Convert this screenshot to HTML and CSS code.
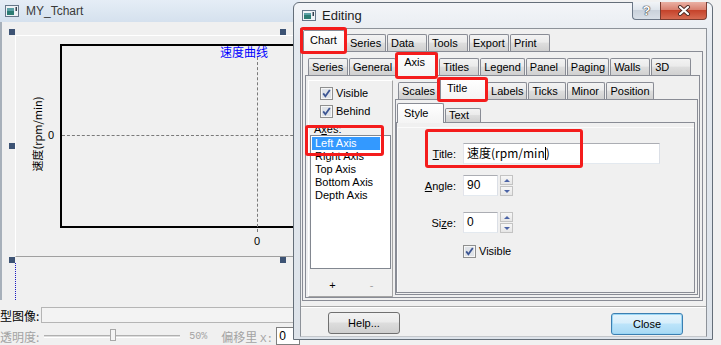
FILE: index.html
```html
<!DOCTYPE html>
<html>
<head>
  <meta charset="utf-8">
  <title>MY_Tchart - Editing</title>
  <link rel="stylesheet" href="styles.css">
</head>
<body>
<div class="desk">

  <!-- designer window with the chart -->
  <div class="chartwin">
    <div class="wtitle">
      <svg class="wicon" width="14" height="12" viewBox="0 0 14 12"><rect x="0.5" y="0.5" width="13" height="11" fill="#eef2f6" stroke="#66778a"/><rect x="2" y="3" width="7" height="7" fill="#2c7c73"/><rect x="2" y="3" width="7" height="3" fill="#5aa0a6"/><rect x="10.5" y="2" width="1.5" height="4" fill="#33404e"/></svg>
      <span>MY_Tchart</span>
    </div>
    <div class="canvas">
      <div class="design">
        <div class="plot">
          <span class="ptitle">速度曲线</span>
          <span class="grid gv"></span>
          <span class="grid gh"></span>
          <span class="ylab">0</span>
          <span class="xlab">0</span>
          <span class="ytitle">速度(rpm/min)</span>
        </div>
      </div>
    </div>
    <div class="frow">
      <span class="flabel">型图像:</span>
      <span class="fbox"></span>
    </div>
    <div class="frow dim">
      <span class="flabel">透明度:</span>
      <span class="slider"><span class="thumb"></span></span>
      <span class="pct">50%</span>
      <span class="off">偏移里 <b>X:</b></span>
      <span class="numbox">0</span>
    </div>

    <span class="handle h1"></span>
    <span class="handle h2"></span>
    <span class="handle h3"></span>
    <span class="handle h4"></span>
    <span class="handle h5"></span>
    <span class="dots"></span>
  </div>

  <!-- TeeChart editor dialog -->
  <div class="dlg">
    <div class="dtitle">
      <svg class="wicon" width="14" height="11" viewBox="0 0 14 11"><rect x="0.5" y="0.5" width="13" height="10" fill="#eef2f6" stroke="#66778a"/><rect x="2" y="3" width="7" height="6" fill="#2c7c73"/><rect x="2" y="3" width="7" height="2" fill="#5aa0a6"/><rect x="10.5" y="2" width="1.5" height="4" fill="#33404e"/></svg>
      <span class="dname">Editing</span>
      <span class="cap q">?</span>
      <span class="cap x"><svg width="14" height="11" viewBox="0 0 14 11"><path d="M3 2 L11 9 M11 2 L3 9" stroke="#4b2a24" stroke-width="4" stroke-linecap="round"/><path d="M3 2 L11 9 M11 2 L3 9" stroke="#fff" stroke-width="2.2" stroke-linecap="round"/></svg></span>
    </div>

    <div class="client">
      <div class="tabs t1">
        <span class="tab on">Chart</span>
        <span class="tab">Series</span>
        <span class="tab">Data</span>
        <span class="tab">Tools</span>
        <span class="tab">Export</span>
        <span class="tab">Print</span>
      </div>
      <div class="page p1">
        <div class="tabs t2">
          <span class="tab">Series</span>
          <span class="tab">General</span>
          <span class="tab on">Axis</span>
          <span class="tab">Titles</span>
          <span class="tab">Legend</span>
          <span class="tab">Panel</span>
          <span class="tab">Paging</span>
          <span class="tab">Walls</span>
          <span class="tab">3D</span>
        </div>
        <div class="page p2">
          <div class="axcol">
            <div class="chk">
              <svg width="13" height="13" viewBox="0 0 13 13"><rect x="0.5" y="0.5" width="12" height="12" fill="#f6f6f6" stroke="#8e8f8f"/><rect x="2" y="2" width="9" height="9" fill="#dfe3e8"/><path d="M3.2 6.4 L5.4 9.2 L9.8 3" fill="none" stroke="#3c5593" stroke-width="1.8"/></svg>
              <span>Visible</span>
            </div>
            <div class="chk">
              <svg width="13" height="13" viewBox="0 0 13 13"><rect x="0.5" y="0.5" width="12" height="12" fill="#f6f6f6" stroke="#8e8f8f"/><rect x="2" y="2" width="9" height="9" fill="#dfe3e8"/><path d="M3.2 6.4 L5.4 9.2 L9.8 3" fill="none" stroke="#3c5593" stroke-width="1.8"/></svg>
              <span>Behind</span>
            </div>
            <div class="axlbl">A<u>x</u>es:</div>
            <div class="list">
              <div class="item sel">Left Axis</div>
              <div class="item">Right Axis</div>
              <div class="item">Top Axis</div>
              <div class="item">Bottom Axis</div>
              <div class="item">Depth Axis</div>
            </div>
            <div class="addrm"><span>+</span><span class="off-btn">-</span></div>
          </div>

          <div class="axright">
            <div class="tabs t3">
              <span class="tab">Scales</span>
              <span class="tab on">Title</span>
              <span class="tab">Labels</span>
              <span class="tab">Ticks</span>
              <span class="tab">Minor</span>
              <span class="tab">Position</span>
            </div>
            <div class="page p3">
              <div class="tabs t4">
                <span class="tab on">Style</span>
                <span class="tab">Text</span>
              </div>
              <div class="page p4">
                <div class="form">
                  <div class="frm-row">
                    <span class="flbl"><u>T</u>itle:</span>
                    <span class="ed wide">速度(rpm/min<i class="caret"></i>)</span>
                  </div>
                  <div class="frm-row r-angle">
                    <span class="flbl"><u>A</u>ngle:</span>
                    <span class="ed num">90</span>
                    <span class="ud"><span class="up"></span><span class="dn"></span></span>
                  </div>
                  <div class="frm-row r-size">
                    <span class="flbl">Si<u>z</u>e:</span>
                    <span class="ed num">0</span>
                    <span class="ud"><span class="up"></span><span class="dn"></span></span>
                  </div>
                  <div class="chk r-vis">
                    <svg width="13" height="13" viewBox="0 0 13 13"><rect x="0.5" y="0.5" width="12" height="12" fill="#f6f6f6" stroke="#8e8f8f"/><rect x="2" y="2" width="9" height="9" fill="#dfe3e8"/><path d="M3.2 6.4 L5.4 9.2 L9.8 3" fill="none" stroke="#3c5593" stroke-width="1.8"/></svg>
                    <span>Visible</span>
                  </div>
                </div>
              </div>
            </div>
          </div>
        </div>
      </div>

      <div class="foot">
        <button class="btn">Help...</button>
        <button class="btn primary">Close</button>
      </div>
    </div>
  </div>

  <!-- red annotation boxes -->
  <span class="mark m-chart"></span>
  <span class="mark m-axis"></span>
  <span class="mark m-title"></span>
  <span class="mark m-left"></span>
  <span class="mark m-input"></span>
</div>
</body>
</html>
```

FILE: styles.css
```css
* {
  box-sizing: border-box;
}

body {
  margin: 0;
  font-family: "Liberation Sans", "Noto Sans CJK SC", sans-serif;
  font-size: 11px;
  color: #000;
}

.desk {
  position: relative;
  width: 721px;
  height: 345px;
  overflow: hidden;
  background: #f1f1f1;
}

/* ---------- left window ---------- */

.chartwin {
  position: absolute;
  left: 0;
  top: 0;
  width: 300px;
  height: 345px;
  background: #f0f0f0;
  overflow: hidden;
}

.wtitle {
  height: 22px;
  display: flex;
  align-items: center;
  gap: 7px;
  padding-left: 5px;
  background: linear-gradient(#e5edf6, #d5e1ee);
  font-size: 12px;
  color: #3a3a3a;
}

.canvas {
  height: 278px;
  border-left: 2px solid #a7b0ba;
  padding: 13px 0 0 13px;
}

.design {
  height: 222px;
  border-top: 1px solid #fff;
  border-left: 1px solid #fff;
  border-bottom: 1px solid #a0a0a0;
  padding: 8px 0 0 44px;
}

.plot {
  position: relative;
  width: 260px;
  height: 184px;
  border: 2px solid #000;
  font-family: "Noto Sans CJK SC", sans-serif;
}

.ptitle {
  position: absolute;
  left: 158px;
  top: -1px;
  font-size: 12px;
  line-height: 14px;
  color: #0000ff;
}

.grid {
  position: absolute;
}

.gv {
  left: 195px;
  top: 11px;
  bottom: -6px;
  border-left: 1px dashed #7a7a7a;
}

.gh {
  left: 0;
  right: 0;
  top: 89px;
  border-top: 1px dashed #7a7a7a;
}

.ylab,
.xlab {
  position: absolute;
  font-family: "Liberation Sans", sans-serif;
  font-size: 11px;
  line-height: 12px;
}

.ylab {
  left: -14px;
  top: 83px;
}

.xlab {
  left: 192px;
  top: 189px;
}

.ytitle {
  position: absolute;
  left: -25px;
  top: 88px;
  font-size: 11px;
  white-space: nowrap;
  transform: translate(-50%, -50%) rotate(-90deg);
}

.frow {
  display: flex;
  align-items: center;
  font-family: "Noto Sans CJK SC", sans-serif;
  font-size: 12px;
  height: 16px;
  margin-top: 7px;
}

.frow.dim {
  height: 18px;
  margin-top: 4px;
  color: #a3a3a3;
}

.flabel {
  white-space: nowrap;
}

.fbox {
  flex: 1;
  height: 16px;
  margin-left: 2px;
  border: 1px solid #b5b5b5;
  background: #f3f3f3;
}

.slider {
  position: relative;
  width: 137px;
  height: 3px;
  margin-left: 5px;
  border-top: 1px solid #b0b0b0;
  border-bottom: 1px solid #fff;
  background: #dcdcdc;
}

.thumb {
  position: absolute;
  left: 66px;
  top: -7px;
  width: 6px;
  height: 12px;
  border: 1px solid #a8a8a8;
  background: #f4f4f4;
}

.pct {
  margin-left: 9px;
  font-family: "Liberation Mono", monospace;
  font-size: 10px;
}

.off {
  margin-left: 14px;
  white-space: nowrap;
}

.off b {
  font-weight: normal;
  font-family: "Liberation Mono", monospace;
  font-size: 11px;
}

.numbox {
  width: 24px;
  height: 18px;
  margin-left: 3px;
  padding-left: 2px;
  border: 1px solid #7f7f7f;
  background: #fff;
  color: #000;
  font-family: "Liberation Sans", sans-serif;
  line-height: 16px;
}

.handle {
  position: absolute;
  width: 6px;
  height: 6px;
  background: #3d5374;
}

.h1 { left: 9px; top: 29px; }
.h2 { left: 280px; top: 29px; }
.h3 { left: 9px; top: 143px; }
.h4 { left: 9px; top: 257px; }
.h5 { left: 280px; top: 257px; }

.dots {
  position: absolute;
  left: 15px;
  top: 263px;
  height: 37px;
  border-left: 1px dotted #1a1ac0;
}

/* ---------- dialog ---------- */

.dlg {
  position: absolute;
  left: 293px;
  top: 2px;
  width: 420px;
  height: 338px;
  display: flex;
  flex-direction: column;
  padding: 0 5px 2px 6px;
  border: 1px solid #646e79;
  border-radius: 6px 6px 0 0;
  background: linear-gradient(#f3f5f8, #e4e9ef 40px, #dde3ea);
}

.dtitle {
  height: 25px;
  display: flex;
  align-items: center;
}

.dtitle .wicon {
  margin-left: 2px;
}

.dname {
  margin-left: 6px;
  font-size: 13px;
  color: #1e1e1e;
}

.cap {
  align-self: flex-start;
  height: 18px;
  margin-top: -1px;
  display: flex;
  align-items: center;
  justify-content: center;
  border: 1px solid #6b7787;
  border-top: none;
}

.cap.q {
  margin-left: auto;
  width: 28px;
  border-right: none;
  border-radius: 0 0 0 4px;
  background: linear-gradient(#f1f4f7, #dfe5ec 45%, #c9d1db 50%, #d8dfe7);
  color: #fff;
  font-size: 13px;
  font-weight: bold;
  text-shadow: 0 0 1px #333, 0 0 1px #333, 0 0 1px #333;
}

.cap.x {
  width: 47px;
  border-color: #7c3c30;
  border-radius: 0 0 4px 0;
  background: linear-gradient(#eab0a3, #d98170 45%, #c5432b 50%, #d66b52);
}

.client {
  flex: 1;
  display: flex;
  flex-direction: column;
  background: #f0f0f0;
  border: 1px solid #8d9299;
  border-bottom-color: #c4c7cb;
}

/* tabs */

.tabs {
  display: flex;
  align-items: flex-end;
  position: relative;
  z-index: 1;
}

.tab {
  height: 17px;
  min-width: 40px;
  padding: 0 3px;
  margin-right: 1px;
  border: 1px solid #898c95;
  border-bottom: none;
  border-radius: 2px 2px 0 0;
  background: linear-gradient(#f3f3f3, #ebebeb 45%, #dedede 50%, #d0d0d0);
  line-height: 17px;
  white-space: nowrap;
}

.tab.on {
  position: relative;
  z-index: 2;
  margin-bottom: -1px;
  padding: 0 6px;
  background: linear-gradient(#fff, #f4f4f4);
  line-height: 18px;
}

.t1 {
  margin-top: 1px;
  padding-left: 2px;
}

.t1 .tab.on {
  height: 22px;
  min-width: 42px;
}

.t2 {
  padding-left: 3px;
}

.t2 .tab.on {
  height: 24px;
  min-width: 41px;
}

.t3 {
  padding-left: 3px;
}

.t3 .tab {
  min-width: 38px;
}

.t3 .tab.on {
  height: 22px;
  min-width: 46px;
}

.t4 {
  margin-top: 3px;
  padding-left: 1px;
}

.t4 .tab {
  height: 14px;
  line-height: 13px;
  min-width: 36px;
}

.t4 .tab.on {
  height: 20px;
  min-width: 47px;
  line-height: 18px;
}

.page {
  border: 1px solid #898c95;
  background: #f0f0f0;
}

.p1 {
  height: 250px;
  margin: 0 3px 0 1px;
  padding: 0 2px 2px 2px;
}

.p2 {
  height: 223px;
  display: flex;
}

.p3 {
  height: 196px;
  padding: 0 2px 1px 0;
}

.p4 {
  height: 171px;
}

/* axes column */

.axcol {
  width: 85px;
  margin: 4px 0 0 2px;
  padding: 6px 0 0 1px;
  border: 1px solid;
  border-color: #fff #a4a4a4 #a4a4a4 #fff;
}

.chk {
  display: flex;
  align-items: center;
  gap: 3px;
  height: 13px;
  margin: 0 0 5px 10px;
  line-height: 13px;
}

.axlbl {
  height: 12px;
  line-height: 12px;
  padding-left: 4px;
}

.list {
  width: 81px;
  height: 134px;
  padding: 1px;
  border: 1px solid #828790;
  background: #fff;
}

.item {
  height: 13px;
  line-height: 13px;
  padding-left: 3px;
  white-space: nowrap;
}

.item.sel {
  width: 68px;
  background: #3399ff;
  color: #fff;
}

.addrm {
  display: flex;
  margin-top: 10px;
  padding-left: 3px;
  line-height: 12px;
}

.addrm span {
  width: 39px;
  text-align: center;
}

.addrm .off-btn {
  color: #a0a0a0;
}

.axright {
  width: 303px;
  margin: 2px 0 0 2px;
}

/* title form */

.form {
  height: 100%;
  padding-top: 16px;
  border-top: 4px solid #f0f0f0;
  box-shadow: inset 1px 1px 0 #fbfbfb;
}

.frm-row {
  display: flex;
  align-items: center;
  height: 21px;
}

.r-angle {
  margin-top: 11px;
}

.r-size {
  margin-top: 16px;
}

.flbl {
  width: 60px;
  padding-right: 1px;
  text-align: right;
}

.ed {
  height: 21px;
  margin-left: 6px;
  padding-left: 3px;
  border: 1px solid;
  border-color: #abadb3 #dbdfe6 #e3e9ef #e2e3ea;
  background: #fff;
  font-size: 12px;
  line-height: 18px;
  white-space: nowrap;
}

.ed.wide {
  width: 197px;
  font-family: "Noto Sans CJK SC", sans-serif;
}

.caret {
  display: inline-block;
  width: 1px;
  height: 13px;
  vertical-align: -2px;
  background: #000;
}

.ed.num {
  width: 35px;
}

.ud {
  display: flex;
  flex-direction: column;
  gap: 1px;
  margin-left: 2px;
}

.ud span {
  width: 13px;
  height: 10px;
  border: 1px solid #c3c3c3;
  background: linear-gradient(#f7f7f7, #e6e6e6);
  position: relative;
}

.ud span::after {
  content: "";
  position: absolute;
  left: 3px;
  top: 3px;
  border-left: 3px solid transparent;
  border-right: 3px solid transparent;
}

.ud .up::after {
  border-bottom: 3px solid #4c64a6;
}

.ud .dn::after {
  border-top: 3px solid #4c64a6;
}

.r-vis {
  margin: 12px 0 0 66px;
}

/* footer buttons */

.foot {
  display: flex;
  margin-top: 5px;
  padding-top: 5px;
  border-top: 1px solid #a9a9a9;
  box-shadow: inset 0 1px 0 #fff;
}

.btn {
  width: 72px;
  height: 22px;
  padding: 0;
  border: 1px solid #707070;
  border-radius: 3px;
  background: linear-gradient(#f2f2f2, #ebebeb 45%, #dddddd 50%, #cfcfcf);
  font-family: "Liberation Sans", sans-serif;
  font-size: 11px;
  color: #000;
}

.btn:first-child {
  margin-left: 27px;
}

.btn.primary {
  margin: 1px 23px 0 auto;
  border-color: #3c7fb1;
  background: linear-gradient(#e5f4fc, #d7eefb 45%, #bce4fa 50%, #a8d9f4);
  box-shadow: inset 0 0 0 1px #9ad6f5;
}

/* red annotation boxes */

.mark {
  position: absolute;
  z-index: 5;
  border: 3px solid #f41c1c;
  border-radius: 3px;
}

.m-chart { left: 300px; top: 27px; width: 47px; height: 27px; }
.m-axis { left: 395px; top: 52px; width: 43px; height: 27px; }
.m-title { left: 437px; top: 77px; width: 51px; height: 25px; }
.m-left { left: 305px; top: 125px; width: 79px; height: 31px; }
.m-input { left: 425px; top: 129px; width: 158px; height: 39px; }
```
